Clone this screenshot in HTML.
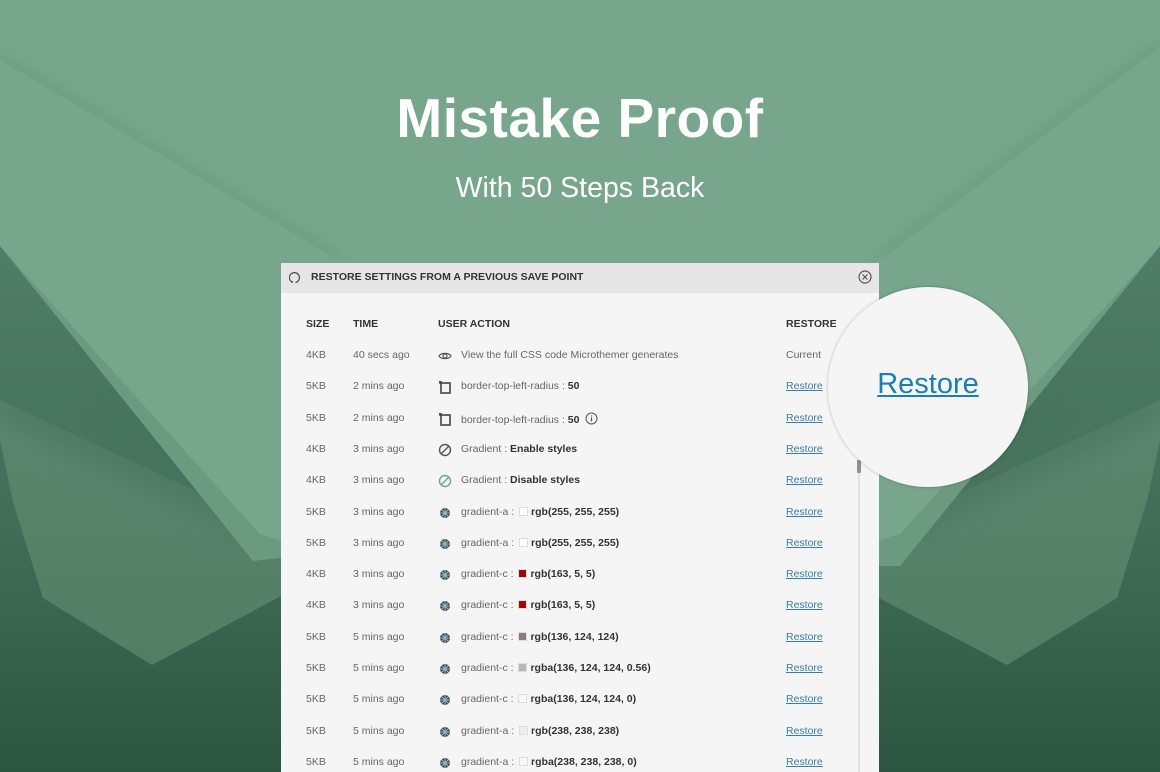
<!DOCTYPE html>
<html><head><meta charset="utf-8"><style>
*{margin:0;padding:0;box-sizing:border-box}
html,body{width:1160px;height:772px;overflow:hidden}
body{position:relative;background:#76a58b;font-family:"Liberation Sans",sans-serif}
svg.bg{position:absolute;left:0;top:0}
h1{position:absolute;top:86px;left:0;width:1160px;text-align:center;color:#fff;font-size:55px;font-weight:bold;letter-spacing:0.5px}
h2{position:absolute;top:172px;left:0;width:1160px;text-align:center;color:#fff;font-size:28.5px;font-weight:normal}
.panel{position:absolute;left:281px;top:263px;width:598px;height:509px;background:#f5f5f5;overflow:hidden}
.hdr{height:30px;background:#e6e6e6;position:relative}
.hdr .t{position:absolute;left:30px;top:8px;font-size:10.5px;font-weight:bold;color:#333}
.row{position:absolute;left:0;width:598px;font-size:10.5px;color:#666;height:14px}
.row span{position:absolute;top:0;white-space:nowrap}
.c1{left:25px}.c2{left:72px}.c3{left:180px}.c4{left:505px}
.row b{color:#333}
.row a{color:#3a7ea6;text-decoration:underline}
.ic{position:absolute;left:157px;top:-1px}
.sw{display:inline-block;width:9px;height:9px;border:1px solid #ddd;vertical-align:-1px;margin:0 3px 0 2px}
.th span{font-weight:bold;color:#333;font-size:10.5px}
.circle{position:absolute;left:828px;top:287px;width:200px;height:200px;border-radius:50%;background:#f5f5f5;box-shadow:0 0 3px rgba(0,0,0,.25)}
.circle a{position:absolute;left:0;width:200px;top:81px;text-align:center;color:#1a7fb5;font-size:29px;text-decoration:underline}
</style></head><body>
<svg class="bg" width="1160" height="772">
<defs>
<linearGradient id="dk" x1="0" y1="0" x2="0" y2="1"><stop offset="0" stop-color="#517e66"/><stop offset="0.55" stop-color="#416d56"/><stop offset="1" stop-color="#2b5540"/></linearGradient>
<linearGradient id="md" x1="0" y1="0" x2="0" y2="1"><stop offset="0" stop-color="#5a866e"/><stop offset="1" stop-color="#537d65"/></linearGradient>
<filter id="bl"><feGaussianBlur stdDeviation="6"/></filter>
<filter id="bl2"><feGaussianBlur stdDeviation="14"/></filter>
</defs>
<rect x="0" y="240" width="1160" height="532" fill="url(#dk)"/>
<polygon points="0,440 13,502 43,598 152,665 300,586 300,540 0,400" fill="url(#md)"/>
<polygon points="1160,440 1148,497 1117,598 1007,665 860,588 860,540 1160,400" fill="url(#md)"/>
<path d="M0,400 L300,540 M1160,400 L860,540" stroke="#4a7660" stroke-width="24" filter="url(#bl2)"/>
<polygon points="0,246 253,561 300,556 300,500 0,230" fill="#6c9a80"/>
<polygon points="1160,246 900,566 860,566 860,500 1160,230" fill="#6c9a80"/>
<polygon points="0,0 1160,0 1160,246 900,534 880,540 280,540 260,534 0,246" fill="#77a68c"/>
<path d="M0,57 L340,258 M1160,44 L880,256" stroke="#5f8d74" stroke-width="6" filter="url(#bl)" opacity=".6"/>
<polygon points="0,60 340,261 880,261 1160,47 1160,246 900,534 260,534 0,246" fill="#77a68c"/>
</svg>
<h1>Mistake Proof</h1>
<h2>With 50 Steps Back</h2>
<div class="panel">
<div class="hdr">
<svg style="position:absolute;left:8px;top:8px" width="13" height="13" viewBox="0 0 13 13"><path d="M3 11 A5 5 0 1 1 6.5 11.5" fill="none" stroke="#555" stroke-width="1.3"/><circle cx="3" cy="11" r="1" fill="#555"/></svg>
<span class="t">RESTORE SETTINGS FROM A PREVIOUS SAVE POINT</span>
<svg style="position:absolute;left:577px;top:7px" width="14" height="14" viewBox="0 0 14 14"><circle cx="7" cy="7" r="6" fill="none" stroke="#555" stroke-width="1.2"/><path d="M4.5 4.5l5 5M9.5 4.5l-5 5" stroke="#555" stroke-width="1.2"/></svg>
</div>
<div class="row th" style="top:55px"><span class="c1">SIZE</span><span class="c2">TIME</span><span class="c3" style="left:157px">USER ACTION</span><span class="c4">RESTORE</span></div>
<div style="position:absolute;left:577px;top:200px;width:2px;height:320px;background:#e2e2e2"></div>
<div style="position:absolute;left:576px;top:197px;width:4px;height:13px;background:#8a8f99;border-radius:1px"></div>
</div>
<div class="circle"><a>Restore</a></div>
<script>
var rows=[
["4KB","40 secs ago","eye","View the full CSS code Microthemer generates","",null,"Current"],
["5KB","2 mins ago","sq","border-top-left-radius : ","50",null],
["5KB","2 mins ago","sq","border-top-left-radius : ","50",null,null,1],
["4KB","3 mins ago","no","Gradient : ","Enable styles",null],
["4KB","3 mins ago","nog","Gradient : ","Disable styles",null],
["5KB","3 mins ago","g","gradient-a : ","rgb(255, 255, 255)","#fff"],
["5KB","3 mins ago","g","gradient-a : ","rgb(255, 255, 255)","#fff"],
["4KB","3 mins ago","g","gradient-c : ","rgb(163, 5, 5)","#a30505"],
["4KB","3 mins ago","g","gradient-c : ","rgb(163, 5, 5)","#a30505"],
["5KB","5 mins ago","g","gradient-c : ","rgb(136, 124, 124)","#887c7c"],
["5KB","5 mins ago","g","gradient-c : ","rgba(136, 124, 124, 0.56)","#bdb5b5"],
["5KB","5 mins ago","g","gradient-c : ","rgba(136, 124, 124, 0)","#f8f8f8"],
["5KB","5 mins ago","g","gradient-a : ","rgb(238, 238, 238)","#eee"],
["5KB","5 mins ago","g","gradient-a : ","rgba(238, 238, 238, 0)","#f8f8f8"]];
var ic={
eye:'<svg width="14" height="14" viewBox="0 0 14 14"><path d="M1 7C3 3.5 11 3.5 13 7C11 10.5 3 10.5 1 7Z" fill="none" stroke="#555" stroke-width="1.2"/><circle cx="7" cy="7" r="2" fill="none" stroke="#555" stroke-width="1.2"/></svg>',
sq:'<svg width="14" height="14" viewBox="0 0 14 14"><path d="M2 1v3M1 2h3" stroke="#444" stroke-width="1.4"/><rect x="3" y="3" width="9" height="10" fill="none" stroke="#444" stroke-width="1.6"/></svg>',
no:'<svg width="14" height="14" viewBox="0 0 14 14"><circle cx="7" cy="7" r="5.5" fill="none" stroke="#555" stroke-width="1.4"/><path d="M3.5 10.5l7-7" stroke="#555" stroke-width="1.4"/></svg>',
nog:'<svg width="14" height="14" viewBox="0 0 14 14"><circle cx="7" cy="7" r="5.5" fill="none" stroke="#6aa88a" stroke-width="1.4"/><path d="M3.5 10.5l7-7" stroke="#6aa88a" stroke-width="1.4"/></svg>',
g:'<svg width="14" height="14" viewBox="0 0 14 14"><circle cx="7" cy="7" r="5" fill="#3a4a55"/><path d="M7 2v10M2 7h10M3.5 3.5l7 7M10.5 3.5l-7 7" stroke="#9bb" stroke-width="1"/></svg>'};
var h='';
rows.forEach(function(r,i){var y=356+i*31.3;
h+='<div class="row" style="left:281px;top:'+(y-7)+'px"><span class="c1">'+r[0]+'</span><span class="c2">'+r[1]+'</span><span class="ic">'+ic[r[2]]+'</span><span class="c3">'+r[3]+(r[5]?'<i class="sw" style="background:'+r[5]+'"></i>':'')+'<b>'+r[4]+'</b>'+(r[7]?' <svg width="13" height="13" viewBox="0 0 13 13" style="vertical-align:-2px;margin-left:3px"><circle cx="6.5" cy="6.5" r="5.5" fill="none" stroke="#555"/><path d="M6.5 5.5v4M6.5 3.5v1" stroke="#555" stroke-width="1.2"/></svg>':'')+'</span><span class="c4">'+(r[6]?r[6]:'<a>Restore</a>')+'</span></div>';});
document.write(h);
</script>
</body></html>
